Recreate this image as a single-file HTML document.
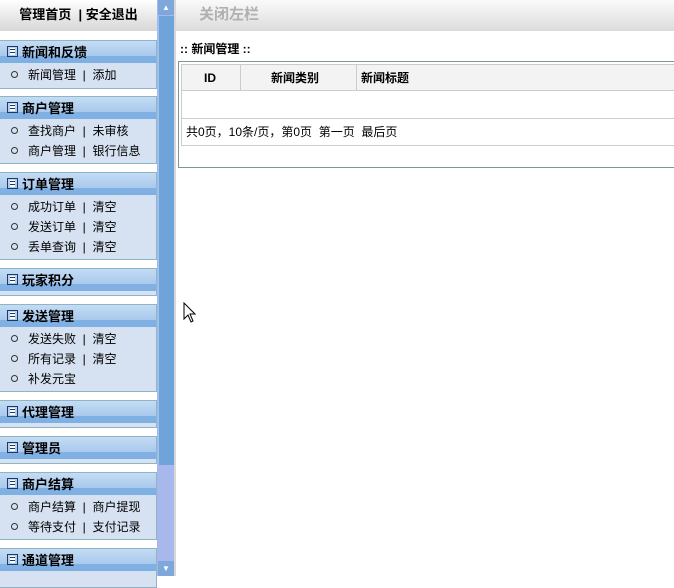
<!DOCTYPE html>
<html><head><meta charset="utf-8"><style>
*{margin:0;padding:0;box-sizing:border-box}
body{width:674px;height:576px;overflow:hidden;background:#fff;font-family:"Liberation Sans","Noto Sans CJK SC","WenQuanYi Zen Hei",sans-serif;font-size:12px;color:#000;position:relative}
.abs{position:absolute}
.top{left:0;top:0;width:157px;height:31px;background:linear-gradient(#fff,#e2e2e2 70%,#d8d8d8);text-align:center;line-height:30px;font-weight:bold;font-size:13px}
.sec{position:absolute;left:0;width:157px;border:1px solid #8fb4c4;border-left:none;background:#d6e1f1;overflow:hidden}
.hd{height:22px;background:linear-gradient(#c4dcf4,#a9c9ec 68%,#80b1e4 69%,#7fb0e4);font-weight:bold;font-size:13px;line-height:23px;padding-left:22px;position:relative;margin-bottom:2px}
.hd:before{content:"";position:absolute;left:7px;top:5px;width:11px;height:11px;border:1px solid #1a3a6a;background:repeating-linear-gradient(#fff 0 2px,#1a3a6a 2px 3px);background-clip:content-box;padding:1px 2px;box-sizing:border-box}
.it{height:20px;line-height:20px;padding-left:11px;font-size:12px}
.it:before{content:"";display:inline-block;width:5px;height:5px;border:1px solid #333;border-radius:50%;margin-right:10px;vertical-align:1px}
.sb{left:157px;top:0;width:17px;height:576px;background:#a8b8ec}
.th{left:158px;top:16px;width:16px;height:449px;background:#6fa3dc;border-left:1px solid #9cc4ec}
.ar{left:158px;width:16px;height:15px;background:#7ea8dc;color:#fff;font-size:8px;text-align:center;line-height:15px}
</style></head><body>
<div class="abs top">管理首页 &nbsp;| 安全退出</div>
<div class="sec" style="top:40px;height:49px"><div class="hd">新闻和反馈</div><div class="it">新闻管理 &nbsp;| &nbsp;添加</div></div>
<div class="sec" style="top:96px;height:68px"><div class="hd">商户管理</div><div class="it">查找商户 &nbsp;| &nbsp;未审核</div><div class="it">商户管理 &nbsp;| &nbsp;银行信息</div></div>
<div class="sec" style="top:172px;height:88px"><div class="hd">订单管理</div><div class="it">成功订单 &nbsp;| &nbsp;清空</div><div class="it">发送订单 &nbsp;| &nbsp;清空</div><div class="it">丢单查询 &nbsp;| &nbsp;清空</div></div>
<div class="sec" style="top:268px;height:28px"><div class="hd">玩家积分</div></div>
<div class="sec" style="top:304px;height:88px"><div class="hd">发送管理</div><div class="it">发送失败 &nbsp;| &nbsp;清空</div><div class="it">所有记录 &nbsp;| &nbsp;清空</div><div class="it">补发元宝</div></div>
<div class="sec" style="top:400px;height:28px"><div class="hd">代理管理</div></div>
<div class="sec" style="top:436px;height:28px"><div class="hd">管理员</div></div>
<div class="sec" style="top:472px;height:68px"><div class="hd">商户结算</div><div class="it">商户结算 &nbsp;| &nbsp;商户提现</div><div class="it">等待支付 &nbsp;| &nbsp;支付记录</div></div>
<div class="sec" style="top:548px;height:40px"><div class="hd">通道管理</div></div>
<div class="abs sb"></div>
<div class="abs th"></div>
<div class="abs ar" style="top:0">▲</div>
<div class="abs ar" style="top:561px">▼</div>
<div class="abs" style="left:174px;top:0;width:2px;height:576px;background:#d8d8d8"></div>
<div class="abs" style="left:176px;top:0;width:498px;height:31px;background:linear-gradient(#fafafa,#dcdcdc);color:#b0b0b0;font-size:15px;line-height:30px;padding-left:23px;font-weight:bold">关闭左栏</div>
<div class="abs" style="left:180px;top:40px;font-weight:bold;font-size:12px">:: 新闻管理 ::</div>
<div class="abs" style="left:178px;top:61px;width:500px;height:107px;border:1px solid #7a9a9a"></div>
<div class="abs" style="left:181px;top:64px;width:500px;height:82px;border:1px solid #ccc">
<div class="abs" style="left:0;top:0;width:500px;height:26px;background:#f3f3f3;border-bottom:1px solid #ccc;font-weight:bold;line-height:26px">
<span class="abs" style="left:22px">ID</span><span class="abs" style="left:89px">新闻类别</span><span class="abs" style="left:179px">新闻标题</span>
<div class="abs" style="left:58px;top:0;width:1px;height:26px;background:#ccc"></div>
<div class="abs" style="left:174px;top:0;width:1px;height:26px;background:#ccc"></div>
</div>
<div class="abs" style="left:0;top:53px;width:500px;height:1px;background:#ccc"></div>
<div class="abs" style="left:4px;top:58px;line-height:18px">共0页，10条/页，第0页 &nbsp;第一页 &nbsp;最后页</div>
</div>
<svg class="abs" style="left:183px;top:302px" width="14" height="22" viewBox="0 0 14 22"><path d="M1 1 L1 17 L5 13 L8 20 L10 19 L7 12 L12 12 Z" fill="#fff" stroke="#000" stroke-width="1"/></svg>
</body></html>
